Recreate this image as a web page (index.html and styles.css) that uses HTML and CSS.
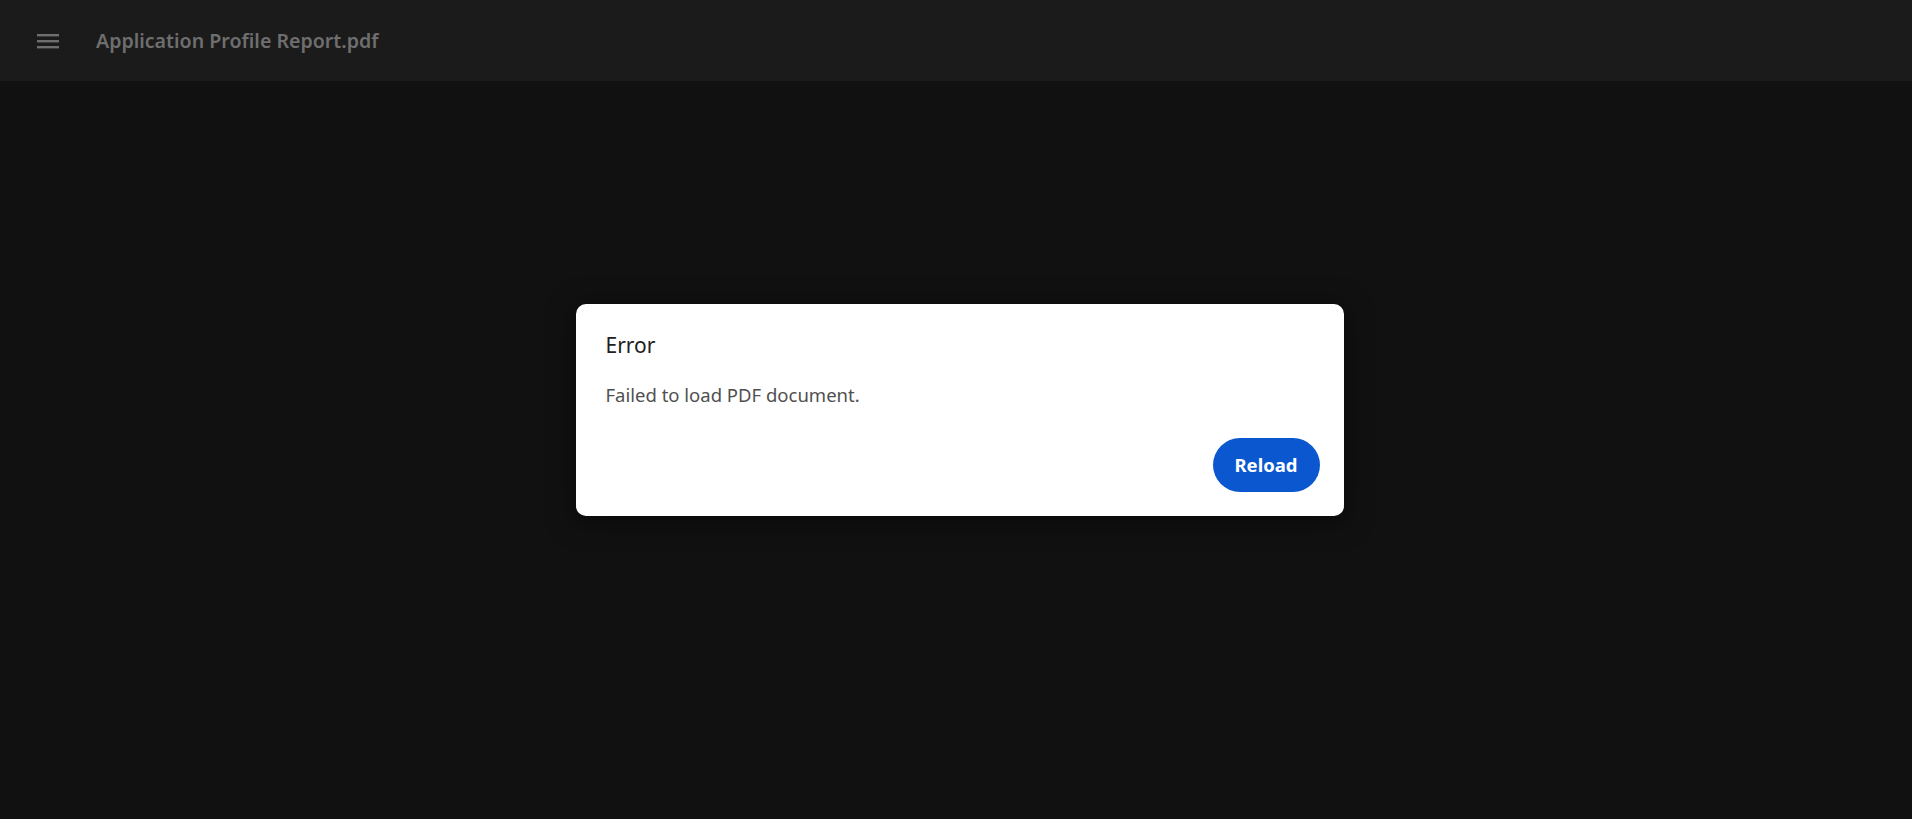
FILE: index.html
```html
<!DOCTYPE html>
<html lang="en">
<head>
<meta charset="utf-8">
<title>Application Profile Report.pdf</title>
<link rel="stylesheet" href="styles.css">
</head>
<body>
<div class="app">
  <header class="toolbar">
    <button class="menu-btn" aria-label="Menu">
      <svg width="22" height="16" viewBox="0 0 22 16"><rect x="0" y="1" width="22" height="2.4" fill="currentColor"/><rect x="0" y="7" width="22" height="2.4" fill="currentColor"/><rect x="0" y="13" width="22" height="2.4" fill="currentColor"/></svg>
    </button>
    <h1 class="title">Application Profile Report.pdf</h1>
  </header>
  <main class="viewer">
    <div class="dialog" role="alertdialog">
      <h2 class="dialog-title">Error</h2>
      <p class="dialog-body">Failed to load PDF document.</p>
      <div class="dialog-actions">
        <button class="reload-btn">Reload</button>
      </div>
    </div>
  </main>
</div>
</body>
</html>
```
FILE: styles.css
```css
* { box-sizing: border-box; }
html, body { margin: 0; height: 100%; }
body {
  background: #111111;
  font-family: "Noto Sans", "Open Sans", sans-serif;
}
.app {
  display: flex;
  flex-direction: column;
  height: 100vh;
}
.toolbar {
  height: 81px;
  flex: none;
  background: #1b1b1b;
  display: flex;
  align-items: center;
  padding-left: 37px;
  gap: 37px;
}
.menu-btn {
  background: none;
  border: 0;
  padding: 0;
  color: #6e6e6e;
  display: flex;
  width: 22px;
  height: 16px;
}
.title {
  margin: 0;
  font-size: 19.6px;
  font-weight: 600;
  color: #6e6e6e;
}
.viewer {
  flex: 1;
  display: flex;
  align-items: center;
  justify-content: center;
  padding-left: 7px;
  margin-top: -81px;
}
.dialog {
  width: 768px;
  background: #ffffff;
  border-radius: 10px;
  padding: 27px 24px 24px 30px;
  box-shadow: 0 4px 28px rgba(0, 0, 0, 0.55);
}
.dialog-title {
  margin: 0;
  font-size: 21px;
  font-weight: 400;
  color: #202020;
  line-height: 29px;
}
.dialog-body {
  margin: 22px 0 0;
  font-size: 18.5px;
  color: #505050;
  line-height: 26px;
}
.dialog-actions {
  display: flex;
  justify-content: flex-end;
  margin-top: 30px;
}
.reload-btn {
  height: 54px;
  width: 107px;
  border: 0;
  border-radius: 27px;
  background: #0b57d0;
  color: #ffffff;
  font-family: inherit;
  font-size: 18.5px;
  font-weight: 700;
}
```
